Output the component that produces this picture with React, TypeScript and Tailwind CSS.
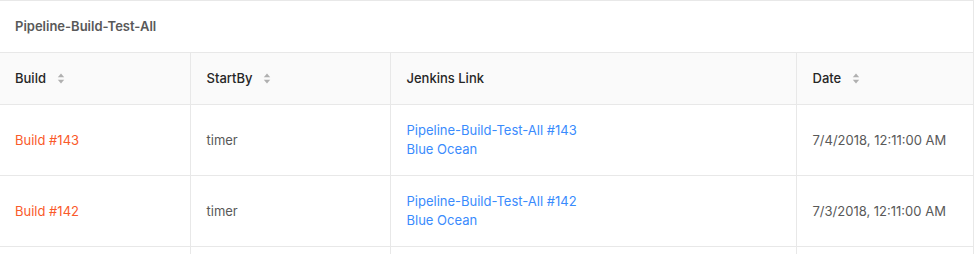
import React from 'react'

type Row = { build: number; startBy: string; date: string }

const ROWS: Row[] = [
  { build: 143, startBy: 'timer', date: '7/4/2018, 12:11:00 AM' },
  { build: 142, startBy: 'timer', date: '7/3/2018, 12:11:00 AM' },
]

function SortIcon() {
  return (
    <svg width="8" height="11" viewBox="0 0 8 11" className="ml-[11px] inline-block align-middle">
      <path d="M4 0.5 L7.2 4.3 L0.8 4.3 Z" fill="#b0b0b0" />
      <path d="M4 10.5 L7.2 6.7 L0.8 6.7 Z" fill="#b0b0b0" />
    </svg>
  )
}

function HeaderCell({ label, sortable, first, last }: { label: string; sortable?: boolean; first?: boolean; last?: boolean }) {
  return (
    <th
      className={`${first ? 'pl-[15px] pr-4' : 'px-4'} py-4 text-left font-medium text-[#262626] border-b border-[#e8e8e8] ${
        last ? '' : 'border-r'
      }`}
    >
      <span className="inline-flex items-center">
        {label}
        {sortable && <SortIcon />}
      </span>
    </th>
  )
}

export default function App() {
  return (
    <div
      className="h-[254px] overflow-hidden bg-white text-[13px] leading-[19px] text-[#595959]"
      style={{ fontFamily: 'Inter, "Liberation Sans", sans-serif' }}
    >
      <div className="border-t border-r border-[#e8e8e8]">
        <div className="pl-[15px] pr-4 py-4 font-semibold text-[#595959] border-b border-[#e8e8e8]">
          Pipeline-Build-Test-All
        </div>
        <table className="w-full border-collapse table-fixed">
          <colgroup>
            <col className="w-[190px]" />
            <col className="w-[200px]" />
            <col className="w-[406px]" />
            <col />
          </colgroup>
          <thead className="bg-[#fafafa]">
            <tr>
              <HeaderCell label="Build" sortable first />
              <HeaderCell label="StartBy" sortable />
              <HeaderCell label="Jenkins Link" />
              <HeaderCell label="Date" sortable last />
            </tr>
          </thead>
          <tbody>
            {ROWS.map((r) => (
              <tr key={r.build}>
                <td className="pl-[15px] pr-4 py-4 border-b border-r border-[#e8e8e8] text-[#fa5a2a]">
                  Build #{r.build}
                </td>
                <td className="px-4 py-4 border-b border-r border-[#e8e8e8]">{r.startBy}</td>
                <td className="px-4 py-4 border-b border-r border-[#e8e8e8] text-[#3a8bfd]">
                  <div>Pipeline-Build-Test-All #{r.build}</div>
                  <div>Blue Ocean</div>
                </td>
                <td className="px-4 py-4 border-b border-[#e8e8e8]">{r.date}</td>
              </tr>
            ))}
            {/* next row starts just below the fold */}
            <tr className="h-[71px]">
              <td className="border-r border-[#e8e8e8]" />
              <td className="border-r border-[#e8e8e8]" />
              <td className="border-r border-[#e8e8e8]" />
              <td />
            </tr>
          </tbody>
        </table>
      </div>
    </div>
  )
}
